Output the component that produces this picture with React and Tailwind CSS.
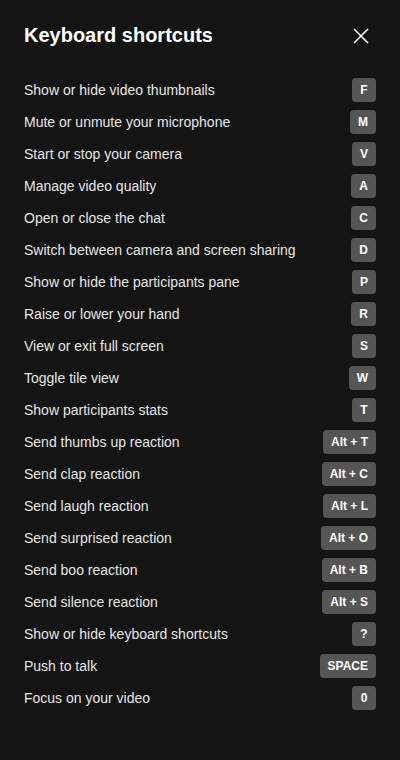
const shortcuts = [
  ['Show or hide video thumbnails', 'F'],
  ['Mute or unmute your microphone', 'M'],
  ['Start or stop your camera', 'V'],
  ['Manage video quality', 'A'],
  ['Open or close the chat', 'C'],
  ['Switch between camera and screen sharing', 'D'],
  ['Show or hide the participants pane', 'P'],
  ['Raise or lower your hand', 'R'],
  ['View or exit full screen', 'S'],
  ['Toggle tile view', 'W'],
  ['Show participants stats', 'T'],
  ['Send thumbs up reaction', 'Alt + T'],
  ['Send clap reaction', 'Alt + C'],
  ['Send laugh reaction', 'Alt + L'],
  ['Send surprised reaction', 'Alt + O'],
  ['Send boo reaction', 'Alt + B'],
  ['Send silence reaction', 'Alt + S'],
  ['Show or hide keyboard shortcuts', '?'],
  ['Push to talk', 'SPACE'],
  ['Focus on your video', '0'],
];

const App = () => {
  return (
    <div
      className="min-h-[760px] w-[400px] bg-[#141414] px-6 pt-[19px]"
      style={{ fontFamily: '"Liberation Sans", Arial, sans-serif' }}
    >
      <div className="flex items-center justify-between h-8">
        <h1 className="text-[20px] font-bold text-white">Keyboard shortcuts</h1>
        <button className="flex h-8 w-8 items-center justify-center mt-[2px] -mr-[1px] text-white">
          <svg width="16" height="16" viewBox="0 0 16 16" fill="none" stroke="currentColor" strokeWidth="1.6">
            <path d="M1 1l14 14M15 1L1 15" />
          </svg>
        </button>
      </div>

      <ul className="mt-[23px]">
        {shortcuts.map(([label, key]) => (
          <li key={label} className="flex h-8 items-center justify-between">
            <span className="text-[14px] text-[#e6e6e6]">{label}</span>
            <span className="flex h-6 min-w-6 items-center justify-center rounded bg-[#555555] px-2 text-[12px] font-bold text-white">
              {key}
            </span>
          </li>
        ))}
      </ul>
    </div>
  );
};

export default App;
